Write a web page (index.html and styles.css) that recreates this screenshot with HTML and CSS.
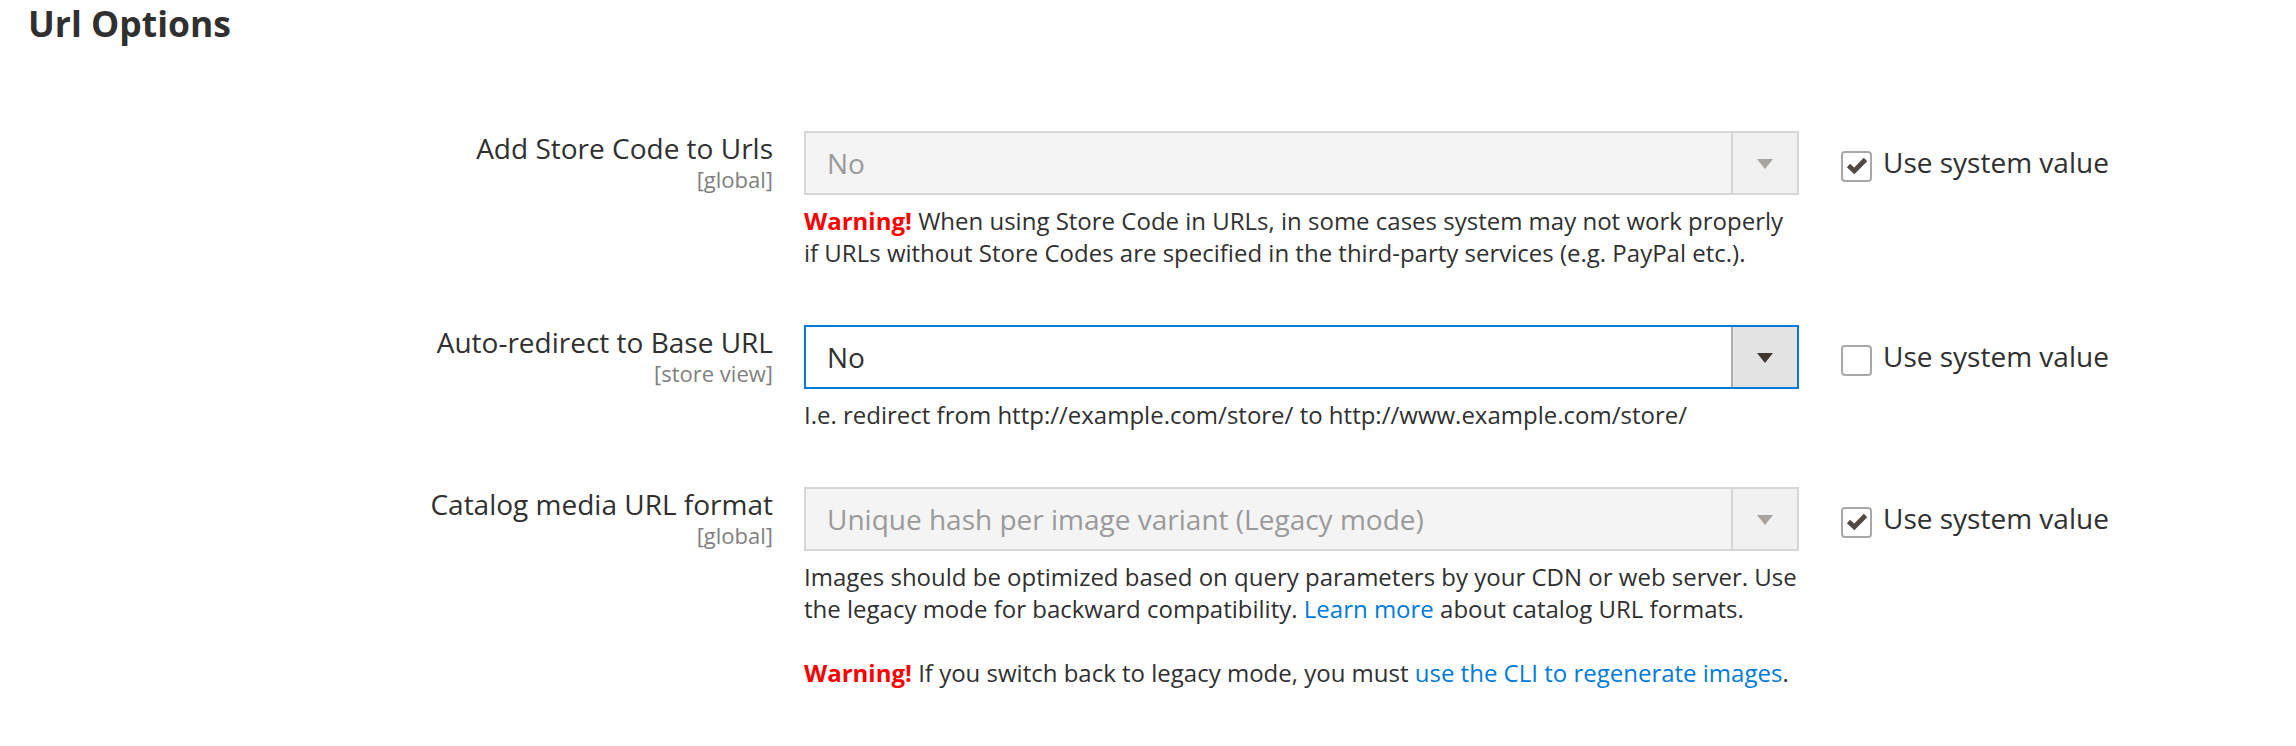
FILE: index.html
```html
<!DOCTYPE html>
<html lang="en">
<head>
<meta charset="utf-8">
<title>Url Options</title>
<link rel="stylesheet" href="styles.css">
</head>
<body>
<div class="page">
  <h2 class="title">Url Options</h2>

  <div class="row">
    <div class="label">
      <span class="name">Add Store Code to Urls</span>
      <span class="scope">[global]</span>
    </div>
    <div class="control">
      <div class="select disabled"><span class="value">No</span><span class="arrow"><i class="tri"></i></span></div>
      <div class="note"><strong class="warn">Warning!</strong> When using Store Code in URLs, in some cases system may not work properly<br>if URLs without Store Codes are specified in the third-party services (e.g. PayPal etc.).</div>
    </div>
    <div class="use">
      <span class="cb"><svg width="27" height="27" viewBox="0 0 27 27"><polyline points="5.5,12.5 11.3,18 22.5,6.5" fill="none" stroke="#514943" stroke-width="4.8"/></svg></span>
      <span class="use-text">Use system value</span>
    </div>
  </div>

  <div class="row">
    <div class="label">
      <span class="name">Auto-redirect to Base URL</span>
      <span class="scope">[store view]</span>
    </div>
    <div class="control">
      <div class="select active"><span class="value">No</span><span class="arrow"><i class="tri"></i></span></div>
      <div class="note">I.e. redirect from http://example.com/store/ to http://www.example.com/store/</div>
    </div>
    <div class="use">
      <span class="cb"></span>
      <span class="use-text">Use system value</span>
    </div>
  </div>

  <div class="row">
    <div class="label">
      <span class="name">Catalog media URL format</span>
      <span class="scope">[global]</span>
    </div>
    <div class="control">
      <div class="select disabled"><span class="value">Unique hash per image variant (Legacy mode)</span><span class="arrow"><i class="tri"></i></span></div>
      <div class="note">Images should be optimized based on query parameters by your CDN or web server. Use<br>the legacy mode for backward compatibility. <a href="#" class="link">Learn more</a> about catalog URL formats.<br><br><strong class="warn">Warning!</strong> If you switch back to legacy mode, you must <a href="#" class="link">use the CLI to regenerate images</a>.</div>
    </div>
    <div class="use">
      <span class="cb"><svg width="27" height="27" viewBox="0 0 27 27"><polyline points="5.5,12.5 11.3,18 22.5,6.5" fill="none" stroke="#514943" stroke-width="4.8"/></svg></span>
      <span class="use-text">Use system value</span>
    </div>
  </div>
</div>
</body>
</html>
```

FILE: styles.css
```css
html, body {
  margin: 0;
  padding: 0;
  background: #ffffff;
}

body {
  font-family: "Open Sans", "Liberation Sans", sans-serif;
  color: #303030;
}

.page {
  padding: 0 0 0 28px;
}

.title {
  margin: 0 0 84px 0;
  font-size: 35.5px;
  line-height: 47px;
  font-weight: 700;
  color: #303030;
}

.row {
  display: grid;
  grid-template-columns: 745px 995px 1fr;
  column-gap: 31px;
  align-items: start;
  margin-bottom: 56px;
}

.label {
  text-align: right;
}

.name {
  display: block;
  font-size: 28px;
  line-height: 34px;
}

.scope {
  display: block;
  font-size: 22px;
  line-height: 29px;
  color: #808080;
}

.select {
  display: flex;
  height: 64px;
  box-sizing: border-box;
  border: 2px solid #d6d6d6;
  background: #f4f4f4;
}

.select .value {
  flex: 1;
  padding-left: 21px;
  font-size: 28px;
  line-height: 60px;
  color: #9a9a9a;
  white-space: nowrap;
  overflow: hidden;
}

.select .arrow {
  width: 66px;
  box-sizing: border-box;
  border-left: 2px solid #d6d6d6;
  background: #f1f1f1;
  display: flex;
  align-items: center;
  justify-content: center;
}

.tri {
  display: block;
  width: 0;
  height: 0;
  margin-top: 2px;
  border-left: 8px solid transparent;
  border-right: 8px solid transparent;
  border-top: 10px solid #a9a3a0;
}

.select.active {
  border-color: #007bdb;
  background: #ffffff;
}

.select.active .value {
  color: #303030;
}

.select.active .arrow {
  background: #e3e3e3;
  border-left-color: #adadad;
}

.select.active .tri {
  border-top-color: #41362f;
}

.note {
  margin-top: 10px;
  font-size: 24px;
  line-height: 32px;
  color: #303030;
}

.warn {
  color: #ff0000;
  font-weight: 700;
}

.link {
  color: #007bdb;
  text-decoration: none;
}

.use {
  display: flex;
  align-items: flex-start;
  padding-top: 14px;
  margin-left: 11px;
}

.cb {
  width: 31px;
  height: 31px;
  box-sizing: border-box;
  margin-top: 6px;
  margin-right: 11px;
  border: 2px solid #a8a8a8;
  border-radius: 4px;
  background: #ffffff;
  display: flex;
  align-items: center;
  justify-content: center;
  flex-shrink: 0;
}

.cb svg {
  display: block;
}

.use-text {
  font-size: 28px;
  line-height: 34px;
  color: #303030;
  white-space: nowrap;
}
```
